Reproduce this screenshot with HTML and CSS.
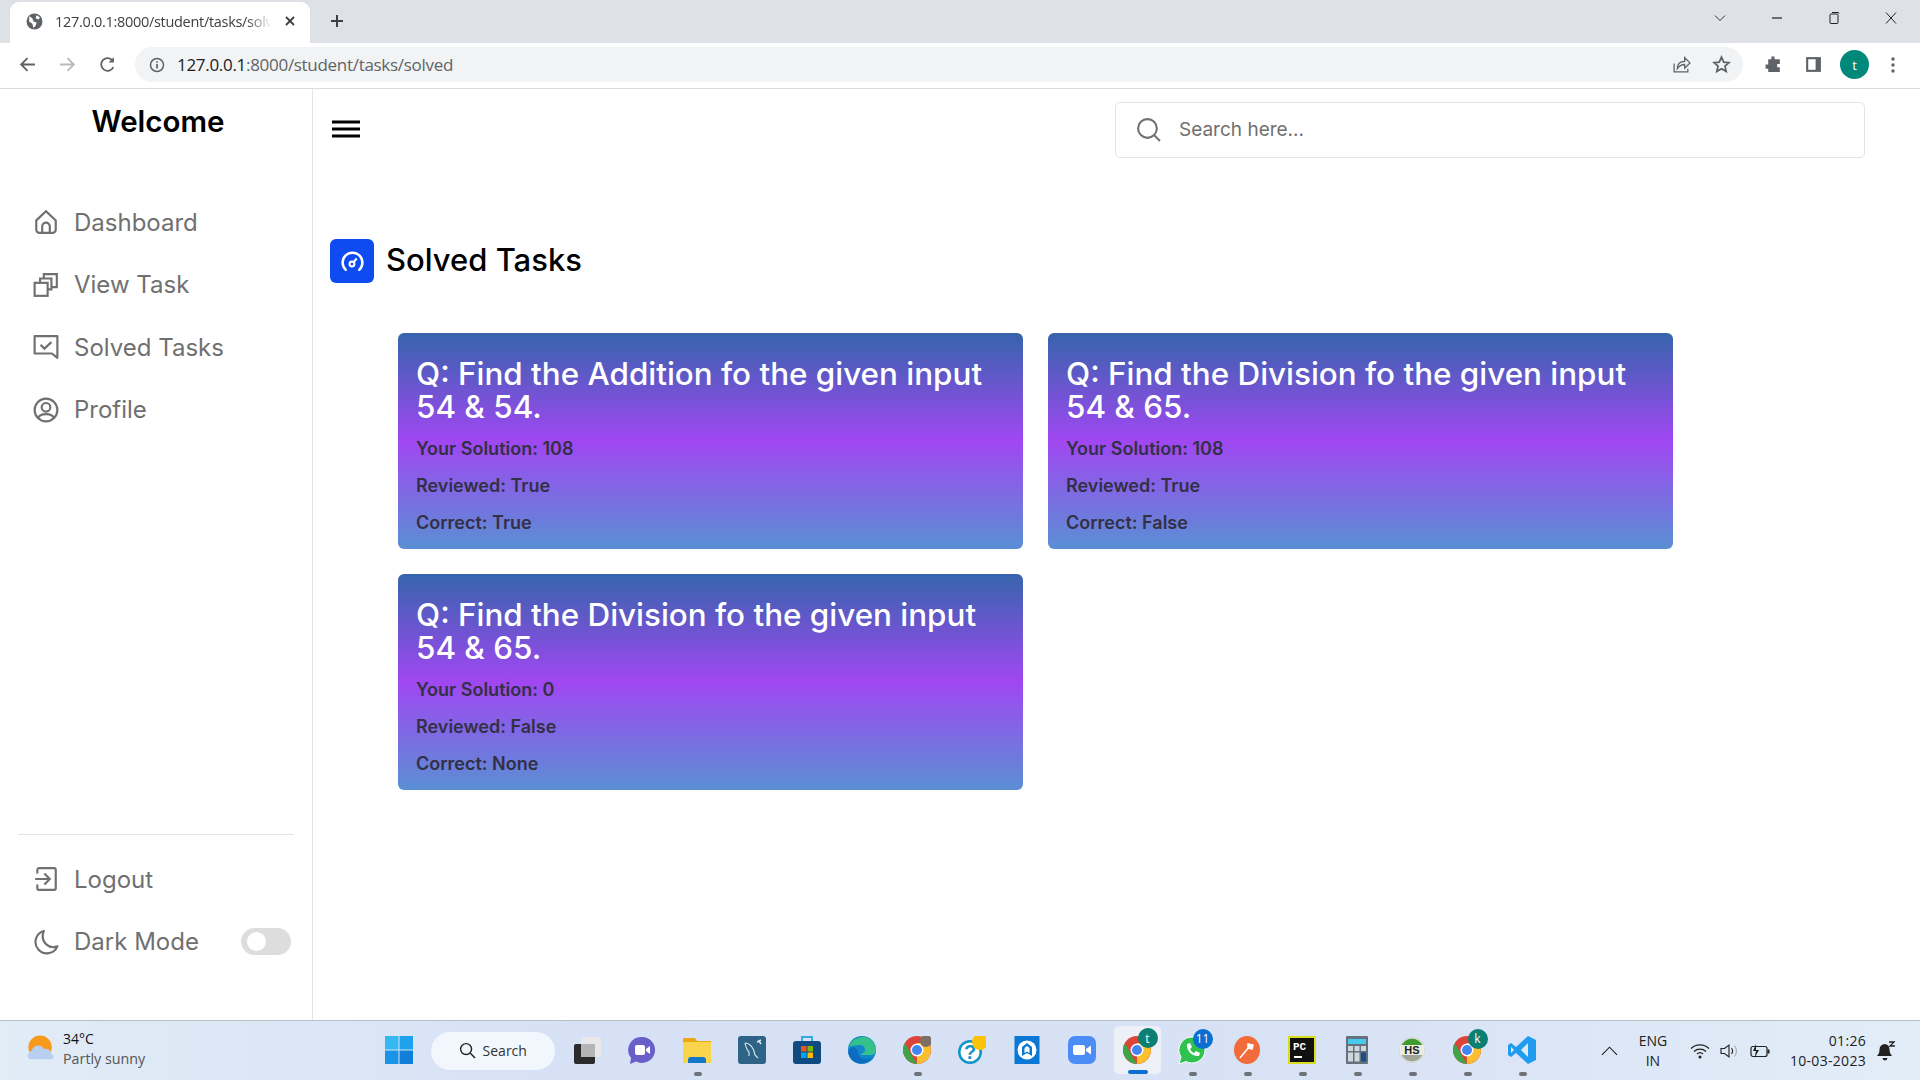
FILE: index.html
```html
<!DOCTYPE html>
<html lang="en">

<head>
  <meta charset="UTF-8" />
  <meta name="viewport" content="width=device-width, initial-scale=1.0" />
  <title>Solved Tasks</title>
  <link rel="stylesheet" href="styles.css">
</head>

<body>
  <!-- Browser tab strip -->
  <div class="tabstrip">
    <div class="tab">
      <svg class="favicon" viewBox="0 0 16 16"><circle cx="8" cy="8" r="7.5" fill="#5f6368" /><path d="M3 3l3 2 1 3 3 1-1 3-2 2-1-4-3-2zM10 2l3 2-1 2-3-1z" fill="#fff" /></svg>
      <span class="tab-title">127.0.0.1:8000/student/tasks/solved</span>
      <svg class="tab-close" viewBox="0 0 12 12"><path d="M2 2l8 8M10 2l-8 8" stroke="#3c4043" stroke-width="1.8" /></svg>
    </div>
    <svg class="new-tab" viewBox="0 0 14 14"><path d="M7 1v12M1 7h12" stroke="#3c4043" stroke-width="2" /></svg>
    <div class="window-controls">
      <svg viewBox="0 0 14 14"><path d="M2 4.500l5 5 5-5" fill="none" stroke="#333" /></svg>
      <svg viewBox="0 0 14 14"><path d="M2 7h10" stroke="#222" stroke-width="1.2" /></svg>
      <svg viewBox="0 0 14 14"><rect x="3" y="3" width="8" height="9.500" rx="1" fill="none" stroke="#222" /><path d="M5 1.500h6.500l.5 1" fill="none" stroke="#222" /></svg>
      <svg viewBox="0 0 14 14"><path d="M2 1.500l10 11M12 1.500l-10 11" stroke="#222" /></svg>
    </div>
  </div>

  <!-- Browser toolbar -->
  <div class="toolbar">
    <svg class="tool-icon" viewBox="0 0 16 16"><path d="M15 8H2M8 2L2 8l6 6" fill="none" stroke="#5f6368" stroke-width="1.700" /></svg>
    <svg class="tool-icon" viewBox="0 0 16 16"><path d="M1 8h13M8 2l6 6-6 6" fill="none" stroke="#b8babd" stroke-width="1.700" /></svg>
    <svg class="tool-icon" viewBox="0 0 16 16"><path d="M13.500 10.500A6 6 0 1 1 13 4.500" fill="none" stroke="#5f6368" stroke-width="1.700" /><path d="M14 1v5H9z" fill="#5f6368" /></svg>
    <div class="omnibox">
      <svg class="info-icon" viewBox="0 0 16 16"><circle cx="8" cy="8" r="6.500" fill="none" stroke="#5f6368" stroke-width="1.500" /><path d="M8 7v4.500M8 4.300v1.500" stroke="#5f6368" stroke-width="1.700" /></svg>
      <span class="url"><span class="url-host">127.0.0.1</span>:8000/student/tasks/solved</span>
      <svg class="omni-icon" viewBox="0 0 18 18"><path d="M2 8v8h13v-3" fill="none" stroke="#5f6368" stroke-width="1.200" /><path d="M5 13c0-5 3-7 7-7V2.500l5 5-5 5V9c-3 0-5 1-7 4z" fill="none" stroke="#5f6368" stroke-width="1.200" /></svg>
      <svg class="omni-icon" viewBox="0 0 18 18"><path d="M9 2l2.100 4.700 5 .5-3.800 3.300 1.100 5L9 13l-4.400 2.500 1.100-5L1.900 7.200l5-.5z" fill="none" stroke="#5f6368" stroke-width="1.700" /></svg>
    </div>
    <svg class="ext-icon" viewBox="0 0 18 18"><path d="M7 1.500h3V4h5v4.500h-2.500v3H15V16H4v-3H1.500V9H4V4h3z" fill="#5f6368" /></svg>
    <svg class="ext-icon" viewBox="0 0 18 18"><rect x="2" y="2" width="14" height="14" fill="#5f6368" /><rect x="4" y="4" width="7" height="10" fill="#fff" /></svg>
    <div class="avatar">t</div>
    <svg class="menu-icon" viewBox="0 0 4 18"><circle cx="2" cy="3" r="1.700" fill="#5f6368" /><circle cx="2" cy="9" r="1.700" fill="#5f6368" /><circle cx="2" cy="15" r="1.700" fill="#5f6368" /></svg>
  </div>

  <div class="app">
    <aside class="sidebar">
      <h2 class="brand">Welcome</h2>
      <nav class="side-nav">
        <a class="side-link">
          <svg viewBox="0 0 24 24"><path d="M3 10.500L12 2l9 8.500V19a3 3 0 0 1-3 3H6a3 3 0 0 1-3-3z" /><path d="M8.500 22v-6a3.500 3.500 0 0 1 7 0v6" /></svg>
          Dashboard
        </a>
        <a class="side-link">
          <svg viewBox="0 0 24 24"><rect x="1.500" y="10" width="12" height="12" /><path d="M6.500 10V6h10.500v10h-3.500M10 6V2h12v12h-5" /></svg>
          View Task
        </a>
        <a class="side-link">
          <svg viewBox="0 0 24 24"><path d="M1.500 2h21v20l-5-4h-16z" stroke-linejoin="round" /><path d="M7 10l3.500 3.500L17 7.500" /></svg>
          Solved Tasks
        </a>
        <a class="side-link">
          <svg viewBox="0 0 24 24"><circle cx="12" cy="12" r="10.500" /><circle cx="12" cy="9.500" r="4" /><path d="M4.500 19.500c2-5 13-5 15 0" /></svg>
          Profile
        </a>
      </nav>
      <div class="side-bottom">
        <a class="side-link">
          <svg viewBox="0 0 24 24"><path d="M4 7V3.500A1.500 1.500 0 0 1 5.500 2h14A1.500 1.500 0 0 1 21 3.500v17a1.500 1.500 0 0 1-1.500 1.500h-14A1.500 1.500 0 0 1 4 20.500V17" /><path d="M2 12h13M10.500 7l5 5-5 5" /></svg>
          Logout
        </a>
        <div class="side-link">
          <svg viewBox="0 0 24 24"><path d="M10 1.800A10.500 10.500 0 1 0 22.500 16 C15 19 6 12 10 1.800z" stroke-linejoin="round" /></svg>
          Dark Mode
          <span class="switch"><span class="knob"></span></span>
        </div>
      </div>
    </aside>

    <main class="content">
      <div class="topbar">
        <svg class="hamburger" viewBox="0 0 28 18"><path d="M0 2h28M0 9h28M0 16h28" stroke="#000" stroke-width="3" /></svg>
        <div class="search">
          <svg viewBox="0 0 24 24"><circle cx="11" cy="11" r="9" fill="none" stroke="#707070" stroke-width="2" /><path d="M17.500 17.500L23 23" stroke="#707070" stroke-width="2" /></svg>
          <span>Search here...</span>
        </div>
      </div>

      <div class="page-title">
        <span class="title-icon">
          <svg viewBox="0 0 24 24"><path d="M5.500 19a9.500 9.500 0 1 1 13 0" fill="none" stroke="#fff" stroke-width="2.400" stroke-linecap="round" /><circle cx="11.500" cy="13.500" r="2.300" fill="none" stroke="#fff" stroke-width="2" /><path d="M13 12l3-4" stroke="#fff" stroke-width="2" /></svg>
        </span>
        <h1>Solved Tasks</h1>
      </div>

      <div class="task-grid">
        <div class="task-card">
          <h3>Q: Find the Addition fo the given input 54 &amp; 54.</h3>
          <p>Your Solution: 108</p>
          <p>Reviewed: True</p>
          <p>Correct: True</p>
        </div>
        <div class="task-card">
          <h3>Q: Find the Division fo the given input 54 &amp; 65.</h3>
          <p>Your Solution: 108</p>
          <p>Reviewed: True</p>
          <p>Correct: False</p>
        </div>
        <div class="task-card">
          <h3>Q: Find the Division fo the given input 54 &amp; 65.</h3>
          <p>Your Solution: 0</p>
          <p>Reviewed: False</p>
          <p>Correct: None</p>
        </div>
      </div>
    </main>
  </div>

  <!-- Windows taskbar -->
  <div class="taskbar">
    <div class="weather">
      <svg viewBox="0 0 30 30"><circle cx="14" cy="13" r="12.500" fill="#f59a1b" /><path d="M3 26a5 5 0 0 1 2-9 7 7 0 0 1 13-2 6 6 0 0 1 8 5 3.500 3.500 0 0 1 1 6z" fill="#b9cff2" /></svg>
      <div class="weather-text"><div class="temp">34°C</div><div class="cond">Partly sunny</div></div>
    </div>

    <div class="tray-apps">
      <div class="slot">
        <svg viewBox="0 0 28 28"><rect x="0" y="0" width="13.500" height="13.500" fill="#35b8f2" /><rect x="14.500" y="0" width="13.500" height="13.500" fill="#1fa2ec" /><rect x="0" y="14.500" width="13.500" height="13.500" fill="#1a94e6" /><rect x="14.500" y="14.500" width="13.500" height="13.500" fill="#0f7fd8" /></svg>
      </div>
      <div class="search-pill">
        <svg viewBox="0 0 18 18"><circle cx="7.500" cy="7.500" r="5.800" fill="none" stroke="#222" stroke-width="1.500" /><path d="M12 12l5 5" stroke="#222" stroke-width="1.600" /></svg>
        Search
      </div>
      <div class="slot">
        <svg viewBox="0 0 28 28"><rect x="1" y="8" width="21" height="20" rx="2" fill="#2b2b2b" /><rect x="8" y="1" width="20" height="20" rx="1" fill="#e8e8ea" /><rect x="8" y="8" width="14" height="13" fill="#b5b5b5" /></svg>
      </div>
      <div class="slot">
        <svg viewBox="0 0 28 28"><path d="M14 1a13 13 0 1 1-6 24.500L2 28l1-6A13 13 0 0 1 14 1z" fill="#6a5fc8" /><rect x="7" y="9" width="10" height="10" rx="2" fill="#fff" /><path d="M18 13l4-3v8l-4-3z" fill="#fff" /></svg>
      </div>
      <div class="slot has-dot">
        <svg viewBox="0 0 28 28"><path d="M0 2h12l2 3h14v22H0z" fill="#e8a912" /><rect x="0" y="6" width="28" height="21" fill="#fbd44d" /><path d="M5 27v-3a3 3 0 0 1 3-3h12a3 3 0 0 1 3 3v3z" fill="#1478c8" /></svg>
      </div>
      <div class="slot">
        <svg viewBox="0 0 28 28"><rect width="28" height="28" rx="3" fill="#2d6386" /><path d="M7 7c5 0 9 5 10 12l3 3M7 7c1 5 2 7 4 9v4" fill="none" stroke="#cfe0ea" stroke-width="1.200" /><path d="M19 6l4-2M21 5l2 3" stroke="#dfeaf0" stroke-width="1.500" /></svg>
      </div>
      <div class="slot">
        <svg viewBox="0 0 28 28"><path d="M9 6V1h10v5" fill="none" stroke="#35a9e0" stroke-width="2" /><rect y="5" width="28" height="23" rx="3" fill="#0f4a80" /><rect x="8" y="10" width="5.500" height="5.500" fill="#f25022" /><rect x="14.500" y="10" width="5.500" height="5.500" fill="#7fba00" /><rect x="8" y="16.500" width="5.500" height="5.500" fill="#00a4ef" /><rect x="14.500" y="16.500" width="5.500" height="5.500" fill="#ffb900" /></svg>
      </div>
      <div class="slot">
        <svg viewBox="0 0 28 28"><circle cx="14" cy="14" r="14" fill="#0f87c9" /><path d="M1 11C3 3 14-2 22 3c4 3 6 8 6 12 0 3-3 4-6 4h-9c0-2 4-2 4-5 0-3-2-5-5-5-5 0-9 1-11 2z" fill="#35c28a" /><path d="M10 17c0 5 6 8 14 5-5 6-14 7-19 3-5-4-6-10-3-12 3-3 8-1 8 4z" fill="#0d6cc0" /></svg>
      </div>
      <div class="slot has-dot">
        <svg viewBox="0 0 28 28"><circle cx="14" cy="14" r="14" fill="#db4437" /><path d="M14 28a14 14 0 0 0 12-21H14z" fill="#fbc02d" /><path d="M14 28A14 14 0 0 1 2 7l7 13z" fill="#3da548" /><circle cx="14" cy="14" r="6.500" fill="#fff" /><circle cx="14" cy="14" r="5" fill="#4285f4" /><circle class="badge-photo" cx="23" cy="5" r="6" fill="#7b6f66" /></svg>
      </div>
      <div class="slot">
        <svg viewBox="0 0 28 28"><circle cx="12" cy="16" r="12" fill="#1094c8" /><circle cx="12" cy="16" r="9.500" fill="#fff" /><text x="12" y="23" class="glyph-q">?</text><circle cx="22" cy="6" r="8" fill="#fdc30a" /></svg>
      </div>
      <div class="slot">
        <svg viewBox="0 0 28 28"><rect width="25" height="28" x="1.500" fill="#0a78d4" /><circle cx="14" cy="14" r="9.500" fill="#fff" /><path d="M9 20V11l5-4 5 4v9l-5-3z" fill="#0a78d4" /><path d="M11.500 17v-5l2.500-2 2.500 2v5l-2.500-1.500z" fill="#fff" /></svg>
      </div>
      <div class="slot">
        <svg viewBox="0 0 28 28"><rect width="28" height="28" rx="7" fill="#4b8cf7" /><rect x="5" y="9" width="12" height="10" rx="2" fill="#fff" /><path d="M18 13l5-3.500v9L18 15z" fill="#fff" /></svg>
      </div>
      <div class="slot is-active">
        <svg viewBox="0 0 28 28"><circle cx="14" cy="14" r="14" fill="#db4437" /><path d="M14 28a14 14 0 0 0 12-21H14z" fill="#fbc02d" /><path d="M14 28A14 14 0 0 1 2 7l7 13z" fill="#3da548" /><circle cx="14" cy="14" r="6.500" fill="#fff" /><circle cx="14" cy="14" r="5" fill="#4285f4" /></svg>
        <span class="count teal">t</span>
      </div>
      <div class="slot has-dot">
        <svg viewBox="0 0 28 28"><path d="M14 1a13 13 0 1 1-6 24.500L1 28l2-7A13 13 0 0 1 14 1z" fill="#2fc24f" stroke="#fff" stroke-width="1" /><path d="M9 8l3-1 2 4-2 2c1 2 2 3 4 4l2-2 4 2-1 3c-7 1-13-6-12-12z" fill="#fff" /></svg>
        <span class="count blue">11</span>
      </div>
      <div class="slot has-dot">
        <svg viewBox="0 0 28 28"><ellipse cx="14" cy="14" rx="13" ry="14" fill="#f26b3a" /><path d="M7 22l9-11M15 8l5 1-1 4-4-1z" stroke="#fff" stroke-width="1.500" fill="#fff" /></svg>
      </div>
      <div class="slot has-dot">
        <svg viewBox="0 0 28 28"><rect x="1" y="1" width="26" height="26" fill="#111" stroke="#d8dd22" stroke-width="2" /><text x="5" y="14" class="glyph-pc">PC</text><path d="M6 21h8" stroke="#fff" stroke-width="2" /></svg>
      </div>
      <div class="slot has-dot">
        <svg viewBox="0 0 28 28"><rect x="3" width="22" height="28" rx="1" fill="#65717d" /><rect x="5" y="3" width="18" height="5" fill="#48c9ee" /><rect x="5" y="10" width="5" height="5" fill="#cfd6dc" /><rect x="11.500" y="10" width="5" height="5" fill="#cfd6dc" /><rect x="18" y="10" width="5" height="5" fill="#cfd6dc" /><rect x="5" y="16.500" width="5" height="9" fill="#cfd6dc" /><rect x="11.500" y="16.500" width="5" height="9" fill="#cfd6dc" /><rect x="18" y="16.500" width="5" height="9" fill="#1b4d8c" /></svg>
      </div>
      <div class="slot has-dot">
        <svg viewBox="0 0 28 28"><circle cx="14" cy="14" r="13" fill="#d6d9d0" /><path d="M3 11a11.500 11.500 0 0 1 22 0z" fill="#3f9b2c" /><path d="M3 17a11.500 11.500 0 0 0 22 0z" fill="#9fa39a" /><rect x="2" y="9" width="24" height="10" fill="#e9ecdf" /><text x="14" y="18" class="glyph-hs">HS</text></svg>
      </div>
      <div class="slot has-dot">
        <svg viewBox="0 0 28 28"><circle cx="14" cy="14" r="14" fill="#db4437" /><path d="M14 28a14 14 0 0 0 12-21H14z" fill="#fbc02d" /><path d="M14 28A14 14 0 0 1 2 7l7 13z" fill="#3da548" /><circle cx="14" cy="14" r="6.500" fill="#fff" /><circle cx="14" cy="14" r="5" fill="#4285f4" /></svg>
        <span class="count teal">k</span>
      </div>
      <div class="slot has-dot">
        <svg viewBox="0 0 28 28"><path d="M20 0l8 4v20l-8 4L8 17l-5 4-3-2v-10l3-2 5 4z" fill="#1f9cf0" /><path d="M20 7l-7 7 7 7z" fill="#dfe8f6" /><path d="M3 11v6l3-3z" fill="#dfe8f6" /></svg>
      </div>
    </div>

    <div class="systray">
      <svg class="chevron" viewBox="0 0 18 10"><path d="M1 9l8-8 8 8" fill="none" stroke="#222" stroke-width="1.200" /></svg>
      <div class="lang">ENG<br>IN</div>
      <svg class="tray-icon" viewBox="0 0 20 16"><path d="M1 5.500a13 13 0 0 1 18 0M4 8.500a9 9 0 0 1 12 0M7 11a4.500 4.500 0 0 1 6 0" fill="none" stroke="#222" stroke-width="1.300" /><circle cx="10" cy="14" r="1.500" fill="#222" /></svg>
      <svg class="tray-icon" viewBox="0 0 20 16"><path d="M1 5.500h3.500L9 2v12l-4.500-3.500H1z" fill="none" stroke="#222" stroke-width="1.100" /><path d="M11.500 5c1.500 2 1.500 4 0 6" fill="none" stroke="#222" stroke-width="1.100" /><path d="M14.500 2.500c2.500 3.500 2.500 7.500 0 11" fill="none" stroke="#aaa" stroke-width="1.100" /></svg>
      <svg class="tray-icon" viewBox="0 0 20 16"><rect x="1" y="3.500" width="16" height="10" rx="2" fill="none" stroke="#222" stroke-width="1.200" /><rect x="17.500" y="6.500" width="2" height="4" fill="#222" /><path d="M6 1L3 8h3l-1.500 7L9 7H6z" fill="#222" /></svg>
      <div class="clock"><div>01:26</div><div>10-03-2023</div></div>
      <svg class="tray-icon bell" viewBox="0 0 20 20"><path d="M9 3a5.500 5.500 0 0 0-5.500 5.500c0 4-1.500 5-2.500 6.500h15c-1-1.500-2.500-3-2.500-6.500A5.500 5.500 0 0 0 9 3z" fill="#222" /><path d="M6.500 17h5a2.500 2.500 0 0 1-5 0z" fill="#222" /><path d="M13 1h5l-4 4h5" fill="none" stroke="#222" stroke-width="1.300" /></svg>
    </div>
  </div>
</body>

</html>
```

FILE: styles.css
```css
* {
  box-sizing: border-box;
}

body {
  margin: 0;
  height: 100vh;
  overflow: hidden;
  display: flex;
  flex-direction: column;
  font-family: Inter, 'Liberation Sans', sans-serif;
  background: #fff;
}

h1,
h2,
h3,
p {
  margin: 0;
}

/* browser chrome */
.tabstrip {
  height: 43px;
  background: #dee1e6;
  display: flex;
  align-items: flex-end;
  padding-left: 10px;
  font-family: 'Open Sans', 'Liberation Sans', sans-serif;
}

.tab {
  width: 300px;
  height: 41px;
  background: #fff;
  border-radius: 9px 9px 0 0;
  display: flex;
  align-items: center;
  padding: 0 14px 3px 16px;
  gap: 12px;
}

.favicon {
  width: 17px;
  height: 17px;
  flex: none;
}

.tab-title {
  font-size: 14.500px;
  color: #3c4043;
  white-space: nowrap;
  overflow: hidden;
  flex: 1;
  letter-spacing: -0.3px;
  -webkit-mask-image: linear-gradient(90deg, #000 88%, transparent);
  mask-image: linear-gradient(90deg, #000 88%, transparent);
}

.tab-close {
  width: 12px;
  height: 12px;
  flex: none;
}

.new-tab {
  width: 14px;
  height: 14px;
  margin: 0 0 15px 20px;
}

.window-controls {
  margin-left: auto;
  display: flex;
  align-self: flex-start;
  gap: 43px;
  padding: 11px 22px 0 0;
}

.window-controls svg {
  width: 14px;
  height: 14px;
}

.toolbar {
  height: 46px;
  background: #fff;
  border-bottom: 1px solid #dadce0;
  display: flex;
  align-items: center;
  padding: 0 0 2px 19px;
  font-family: 'Open Sans', 'Liberation Sans', sans-serif;
}

.tool-icon {
  width: 17px;
  height: 17px;
  margin-right: 23px;
}

.omnibox {
  width: 1608px;
  height: 35px;
  margin-left: -4px;
  border-radius: 18px;
  background: #f1f3f4;
  display: flex;
  align-items: center;
  padding: 0 12px 0 14px;
}

.info-icon {
  width: 16px;
  height: 16px;
  margin-right: 12px;
}

.url {
  font-size: 17px;
  color: #5f6368;
  flex: 1;
  letter-spacing: -0.3px;
}

.url-host {
  color: #202124;
}

.omni-icon {
  width: 19px;
  height: 19px;
  margin-left: 21px;
}

.ext-icon {
  width: 19px;
  height: 19px;
  margin-left: 21px;
}

.avatar {
  width: 29px;
  height: 29px;
  margin-left: 17px;
  border-radius: 50%;
  background: #00897b;
  color: #fff;
  font-size: 13px;
  display: flex;
  align-items: center;
  justify-content: center;
}

.menu-icon {
  width: 4px;
  height: 18px;
  margin-left: 22px;
}

/* app */
.app {
  flex: 1;
  display: flex;
  min-height: 0;
}

.sidebar {
  width: 313px;
  flex: none;
  border-right: 1px solid #e4e4e4;
  display: flex;
  flex-direction: column;
  padding: 0 18px 47px;
}

.brand {
  text-align: center;
  font-size: 29.500px;
  line-height: 34px;
  font-weight: 600;
  color: #000;
  margin-top: 15px;
  padding-left: 4px;
}

.side-nav {
  margin-top: 53px;
  flex: 1;
}

.side-bottom {
  border-top: 1px solid #e4e4e4;
  padding-top: 13px;
}

.side-link {
  display: flex;
  align-items: center;
  height: 62.500px;
  font-size: 24px;
  color: #707070;
  padding-left: 15px;
  gap: 15px;
}

.side-link svg {
  width: 26px;
  height: 26px;
  flex: none;
  fill: none;
  stroke: #707070;
  stroke-width: 2;
}

.switch {
  margin-left: auto;
  margin-right: 3px;
  width: 50px;
  height: 27px;
  border-radius: 14px;
  background: #ddd;
  display: flex;
  align-items: center;
  padding-left: 6px;
}

.knob {
  width: 19px;
  height: 19px;
  border-radius: 50%;
  background: #fff;
}

.content {
  flex: 1;
  min-width: 0;
  padding-left: 17px;
}

.topbar {
  display: flex;
  align-items: center;
  height: 56px;
  margin-top: 13px;
}

.hamburger {
  width: 28px;
  height: 18px;
  margin: -2px 0 0 2px;
}

.search {
  width: 750px;
  height: 56px;
  margin-left: auto;
  margin-right: 55px;
  border: 1px solid #e4e4e4;
  border-radius: 5px;
  display: flex;
  align-items: center;
  padding: 0 0 2px 20px;
  gap: 18px;
  font-size: 19px;
  color: #707070;
}

.search svg {
  width: 25px;
  height: 25px;
}

.page-title {
  display: flex;
  align-items: center;
  gap: 12px;
  margin-top: 80px;
}

.title-icon {
  width: 44px;
  height: 44px;
  border-radius: 6px;
  background: #0e4bf1;
  display: flex;
  align-items: center;
  justify-content: center;
}

.title-icon svg {
  width: 25px;
  height: 25px;
  margin-top: 3px;
}

.page-title h1 {
  font-size: 31px;
  line-height: 44px;
  font-weight: 500;
  color: #000;
  padding-bottom: 2px;
}

.task-grid {
  display: grid;
  grid-template-columns: 625px 625px;
  gap: 25px;
  margin: 49px 0 0 68px;
}

.task-card {
  height: 216px;
  border-radius: 6px;
  padding: 25px 18px 0;
  color: #332f45;
  background: linear-gradient(180deg, #3664ac 0%, #a047f2 50%, #5a8fd3 100%);
}

.task-card h3 {
  font-size: 31.400px;
  line-height: 33px;
  font-weight: 500;
  color: #fff;
  margin-bottom: 6px;
}

.task-card p {
  font-size: 18px;
  line-height: 37px;
  font-weight: 600;
}

/* windows taskbar */
.taskbar {
  height: 60px;
  flex: none;
  border-top: 1px solid #b9bec7;
  background: linear-gradient(90deg, #e1ecf7 0%, #d6e1f5 30%, #d8e2f5 70%, #e2edf8 100%);
  display: flex;
  align-items: center;
  font-family: 'Open Sans', 'Liberation Sans', sans-serif;
  position: relative;
}

.weather {
  position: absolute;
  left: 27px;
  top: 8px;
  display: flex;
  align-items: center;
  gap: 8px;
}

.weather svg {
  width: 28px;
  height: 30px;
}

.temp {
  font-size: 14px;
  color: #111;
  line-height: 20px;
}

.cond {
  font-size: 14.300px;
  color: #555;
  line-height: 20px;
}

.tray-apps {
  display: flex;
  align-items: center;
  margin-left: 371px;
}

.slot {
  width: 55px;
  height: 59px;
  flex: none;
  display: flex;
  align-items: center;
  justify-content: center;
  position: relative;
  margin-top: -1px;
}

.slot svg {
  width: 28px;
  height: 28px;
  overflow: hidden;
}

.has-dot::after {
  content: "";
  position: absolute;
  bottom: 4px;
  left: 24px;
  width: 8px;
  height: 4px;
  border-radius: 2px;
  background: #6e7278;
}

.is-active {
  background: #eef0f8;
  border-radius: 5px;
  height: 48px;
  width: 47px;
  margin: -1px 4px 0;
}

.is-active::after {
  content: "";
  position: absolute;
  bottom: 0;
  left: 14px;
  width: 20px;
  height: 4px;
  border-radius: 2px;
  background: #0a6fd0;
}

.search-pill {
  width: 123.500px;
  height: 38px;
  margin: 0 5px;
  border-radius: 19px;
  background: #f2f6fd;
  display: flex;
  align-items: center;
  justify-content: center;
  gap: 7px;
  font-size: 14px;
  color: #333;
}

.search-pill svg {
  width: 17px;
  height: 17px;
}

.count {
  position: absolute;
  top: 8px;
  right: 7px;
  width: 20px;
  height: 20px;
  border-radius: 50%;
  color: #fff;
  font-size: 12px;
  display: flex;
  align-items: center;
  justify-content: center;
}

.is-active .count {
  top: 2px;
  right: 3px;
}

.teal {
  background: #0a7f72;
}

.blue {
  background: #0a6fd0;
}

.glyph-q {
  font: 700 20px 'Liberation Sans', sans-serif;
  fill: #1094c8;
  text-anchor: middle;
}

.glyph-pc {
  font: 700 11px 'Liberation Mono', monospace;
  fill: #fff;
}

.glyph-hs {
  font: 700 11px 'Liberation Sans', sans-serif;
  fill: #222;
  text-anchor: middle;
}

.systray {
  position: absolute;
  right: 0;
  top: 0;
  bottom: 0;
  display: flex;
  align-items: center;
  color: #222;
}

.chevron {
  width: 17px;
  height: 10px;
  margin-right: 19px;
}

.lang {
  font-size: 14px;
  line-height: 20px;
  text-align: center;
  width: 32px;
  margin-right: 21px;
}

.tray-icon {
  width: 20px;
  height: 16px;
  margin-right: 10px;
}

.clock {
  font-size: 14px;
  line-height: 20px;
  text-align: right;
  margin: 0 10px 0 10px;
  letter-spacing: 0.3px;
}

.bell {
  width: 20px;
  height: 20px;
  margin-right: 24px;
}
```
